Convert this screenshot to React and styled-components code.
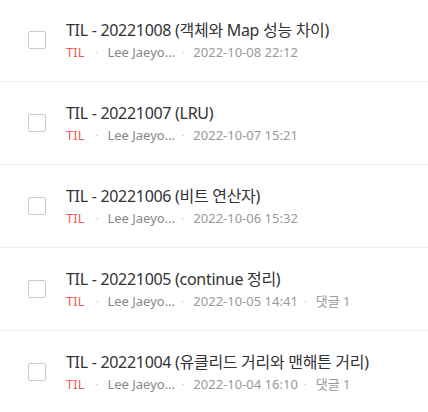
import React from 'react';
import styled, { createGlobalStyle } from 'styled-components';

const posts = [
  { title: 'TIL - 20221008 (객체와 Map 성능 차이)', date: '2022-10-08 22:12' },
  { title: 'TIL - 20221007 (LRU)', date: '2022-10-07 15:21' },
  { title: 'TIL - 20221006 (비트 연산자)', date: '2022-10-06 15:32' },
  { title: 'TIL - 20221005 (continue 정리)', date: '2022-10-05 14:41', comments: 1 },
  { title: 'TIL - 20221004 (유클리드 거리와 맨해튼 거리)', date: '2022-10-04 16:10', comments: 1 },
];

function App() {
  return (
    <>
      <GlobalStyle />
      <List>
        {posts.map((p) => (
          <Row key={p.date}>
            <Check />
            <Content>
              <Title>{p.title}</Title>
              <Meta>
                <Category>TIL</Category>
                <Sep>·</Sep>
                <Author>Lee Jaeyoung</Author>
                <Sep>·</Sep>
                <Date>{p.date}</Date>
                {p.comments && (
                  <>
                    <Sep>·</Sep>
                    <Date>댓글 {p.comments}</Date>
                  </>
                )}
              </Meta>
            </Content>
          </Row>
        ))}
      </List>
    </>
  );
}

export default App;

const GlobalStyle = createGlobalStyle`
  body {
    margin: 0;
    background: #fff;
    font-family: "Noto Sans", "Noto Sans CJK KR", sans-serif;
  }
`

const List = styled.div`
  display: flex;
  flex-direction: column;
  margin-top: -1px;
`

const Row = styled.div`
  display: flex;
  align-items: center;
  height: 82px;
  padding-left: 28px;
  border-bottom: 1px solid #ececec;
`

const Check = styled.div`
  width: 16px;
  height: 16px;
  border: 1px solid #c2ccd6;
  border-radius: 2px;
  margin-right: 20px;
  flex-shrink: 0;
`

const Content = styled.div`
  display: flex;
  flex-direction: column;
  padding-top: 2px;
`

const Title = styled.div`
  font-size: 16px;
  line-height: 22px;
  color: #333;
  letter-spacing: -0.3px;
`

const Meta = styled.div`
  display: flex;
  align-items: center;
  font-size: 13px;
  line-height: 22px;
  color: #999;
`

const Category = styled.span`
  color: #f55a5a;
  margin-right: 5px;
`

const Sep = styled.span`
  color: #ccc;
  margin: 0 9px 0 6px;
  font-size: 11px;
`

const Author = styled.span`
  color: #888;
  max-width: 68px;
  white-space: nowrap;
  overflow: hidden;
  text-overflow: ellipsis;
`

const Date = styled.span`
  color: #999;
`
